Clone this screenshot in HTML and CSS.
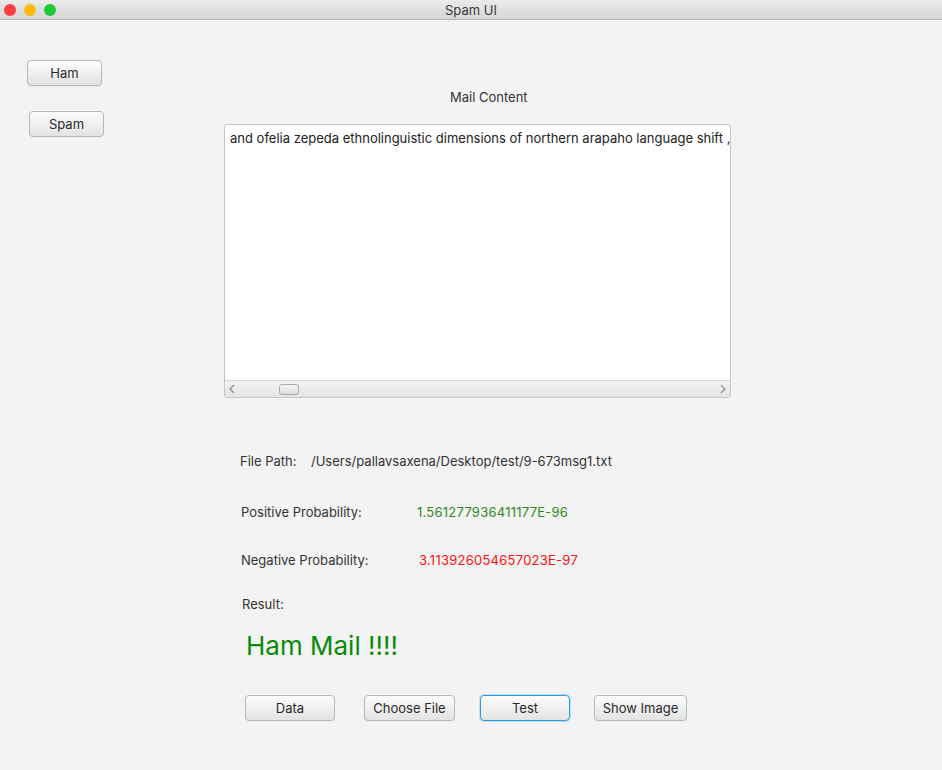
FILE: index.html
```html
<!DOCTYPE html>
<html>
<head>
<meta charset="utf-8">
<title>Spam UI</title>
<link rel="stylesheet" href="styles.css">
</head>
<body>
<div class="window">
  <div class="titlebar">
    <div class="lights">
      <span class="light red"></span>
      <span class="light yellow"></span>
      <span class="light green"></span>
    </div>
    <div class="title">Spam UI</div>
    <div class="spacer"></div>
  </div>
  <div class="content">
    <div class="sidebar">
      <button class="btn btn-ham">Ham</button>
      <button class="btn btn-spam">Spam</button>
    </div>
    <div class="main">
      <div class="mail-label">Mail Content</div>
      <div class="textarea">
        <div class="text">and ofelia zepeda ethnolinguistic dimensions of northern arapaho language shift ,</div>
        <div class="hscroll">
          <svg class="arrow" width="8" height="10" viewBox="0 0 8 10"><path d="M6 1 L2 5 L6 9" fill="none" stroke="#8a8a8a" stroke-width="1.2"/></svg>
          <div class="track"><div class="thumb"></div></div>
          <svg class="arrow" width="8" height="10" viewBox="0 0 8 10"><path d="M2 1 L6 5 L2 9" fill="none" stroke="#8a8a8a" stroke-width="1.2"/></svg>
        </div>
      </div>
      <div class="row row-path">
        <span class="lbl">File Path:</span>
        <span class="path">/Users/pallavsaxena/Desktop/test/9-673msg1.txt</span>
      </div>
      <div class="row row-pos">
        <span class="lbl">Positive Probability:</span>
        <span class="val pos">1.561277936411177E-96</span>
      </div>
      <div class="row row-neg">
        <span class="lbl">Negative Probability:</span>
        <span class="val neg">3.113926054657023E-97</span>
      </div>
      <div class="row row-result">
        <span class="lbl">Result:</span>
      </div>
      <div class="result-big">Ham Mail !!!!</div>
      <div class="actions">
        <button class="btn btn-data">Data</button>
        <button class="btn btn-choose">Choose File</button>
        <button class="btn btn-test">Test</button>
        <button class="btn btn-show">Show Image</button>
      </div>
    </div>
  </div>
</div>
</body>
</html>
```

FILE: styles.css
```css
html, body {
  margin: 0;
  padding: 0;
}
body {
  background: #f3f3f3;
  font-family: Inter, "Liberation Sans", Arial, sans-serif;
  font-size: 13px;
  color: #333;
}
.window {
  width: 942px;
  height: 770px;
  overflow: hidden;
  background: #f3f3f3;
}
.titlebar {
  height: 19px;
  border-bottom: 1px solid #b3b3b3;
  background: linear-gradient(#ebebeb, #d5d5d5);
  display: grid;
  grid-template-columns: 1fr auto 1fr;
  align-items: center;
}
.lights {
  display: flex;
  gap: 8px;
  padding-left: 4px;
}
.light {
  width: 12px;
  height: 12px;
  border-radius: 50%;
  display: block;
}
.light.red { background: #fc3d45; }
.light.yellow { background: #fdbc0d; }
.light.green { background: #20c83a; }
.title {
  text-align: center;
  font-size: 13px;
  color: #3c3c3c;
}
.content {
  display: flex;
}
.sidebar {
  width: 224px;
  display: flex;
  flex-direction: column;
  align-items: flex-start;
  padding-top: 40px;
}
.btn {
  font-family: Inter, "Liberation Sans", Arial, sans-serif;
  font-size: 13px;
  color: #2a2a2a;
  height: 26px;
  border: 1px solid #b8b8b8;
  border-radius: 4px;
  background: linear-gradient(#fcfcfc, #e3e3e3);
  padding: 0;
  box-sizing: border-box;
  box-shadow: 0 1px 0 rgba(0,0,0,0.04);
}
.btn-ham {
  width: 75px;
  margin-left: 27px;
}
.btn-spam {
  width: 75px;
  margin-left: 29px;
  margin-top: 25px;
}
.main {
  flex: 1;
  display: flex;
  flex-direction: column;
  align-items: flex-start;
}
.mail-label {
  margin-top: 69px;
  margin-left: 226px;
  line-height: 16px;
  color: #333;
}
.textarea {
  margin-top: 19px;
  width: 507px;
  height: 274px;
  box-sizing: border-box;
  border: 1px solid #c6c6c6;
  border-radius: 3px;
  background: #fff;
  display: flex;
  flex-direction: column;
  overflow: hidden;
}
.text {
  flex: 1;
  padding: 5px 0 0 5px;
  line-height: 16px;
  color: #222;
  white-space: nowrap;
}
.hscroll {
  height: 16px;
  border-top: 1px solid #d8d8d8;
  background: linear-gradient(#f2f2f2, #e4e4e4);
  display: flex;
  align-items: center;
  padding: 0 3px;
}
.arrow {
  display: block;
}
.track {
  flex: 1;
  height: 16px;
  display: flex;
  align-items: center;
  padding-left: 43px;
}
.thumb {
  width: 20px;
  height: 11px;
  box-sizing: border-box;
  border: 1px solid #a9a9a9;
  border-radius: 3px;
  background: linear-gradient(#f6f6f6, #dedede);
}
.row {
  line-height: 16px;
  display: flex;
}
.row-path {
  margin-top: 55px;
  margin-left: 16px;
}
.row-path .lbl {
  width: 71px;
}
.row-pos {
  margin-top: 35px;
  margin-left: 17px;
}
.row-pos .lbl {
  width: 176px;
}
.row-neg {
  margin-top: 32px;
  margin-left: 17px;
}
.row-neg .lbl {
  width: 178px;
}
.row-result {
  margin-top: 28px;
  margin-left: 18px;
}
.lbl {
  color: #333;
}
.path {
  color: #333;
}
.val {
  letter-spacing: 0.25px;
}
.pos {
  color: #2f8a1c;
}
.neg {
  color: #ff1010;
}
.result-big {
  margin-top: 18px;
  margin-left: 22px;
  font-size: 26px;
  line-height: 32px;
  color: #0a8a0a;
}
.actions {
  display: flex;
  margin-top: 33px;
  margin-left: 21px;
}
.btn-data { width: 90px; }
.btn-choose { width: 91px; margin-left: 29px; }
.btn-test {
  width: 90px;
  margin-left: 25px;
  border: 1px solid #2c9be0;
  box-shadow: 0 0 0 1px rgba(90,180,240,0.35);
}
.btn-show { width: 93px; margin-left: 24px; }
```
